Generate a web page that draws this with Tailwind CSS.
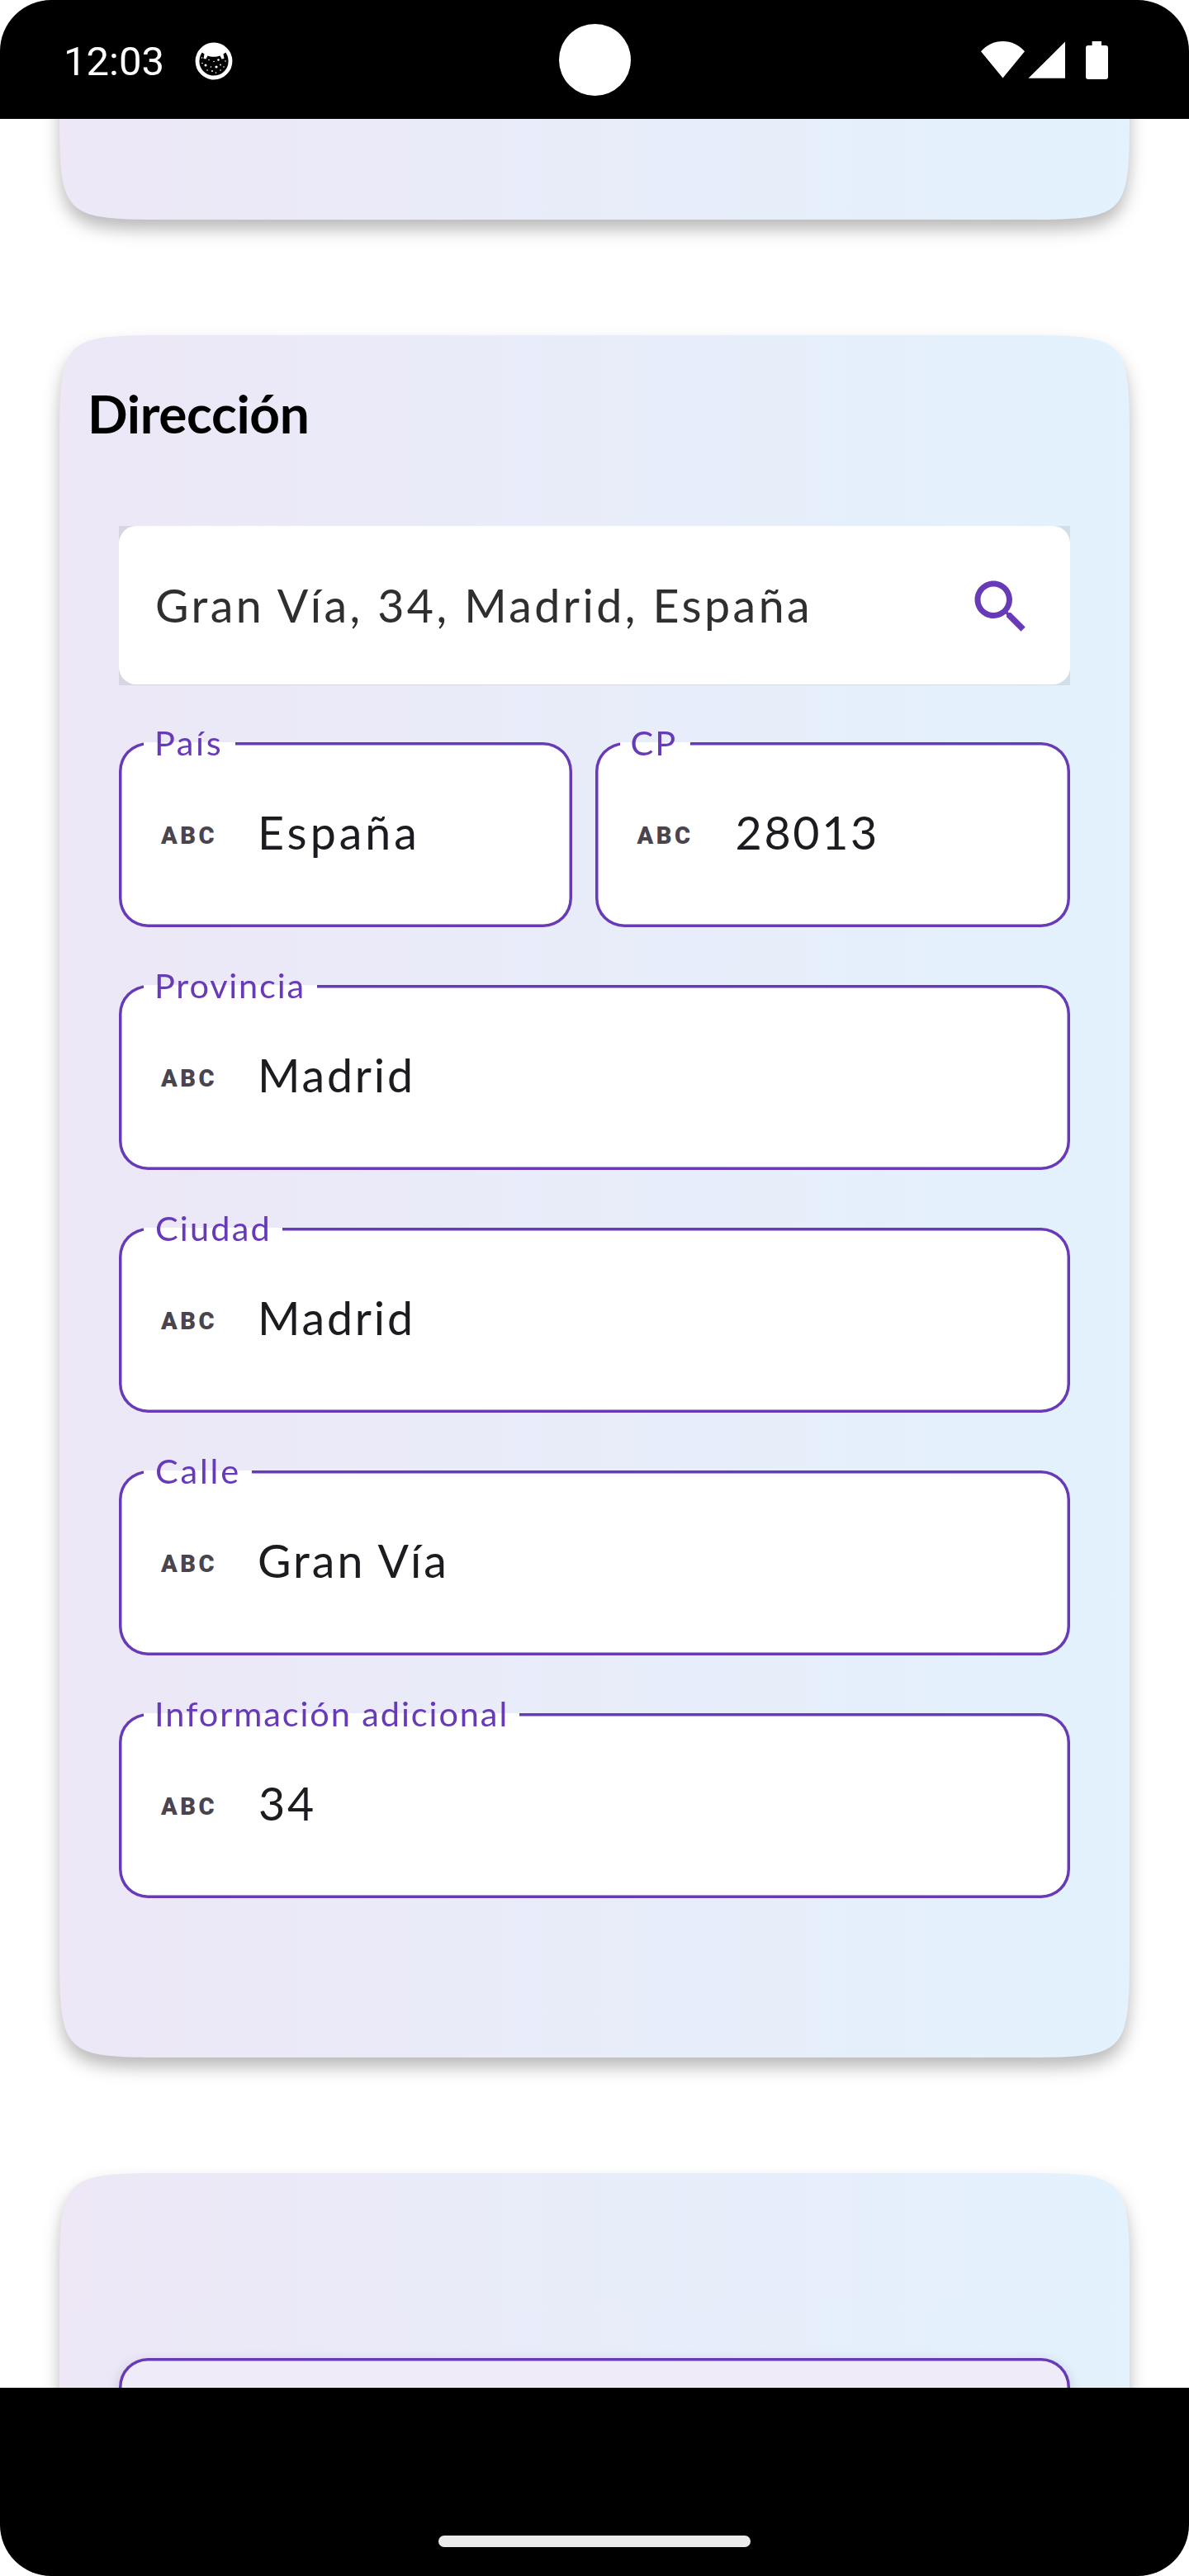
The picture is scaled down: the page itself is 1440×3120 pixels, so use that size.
<!DOCTYPE html>
<html lang="es">
<head>
<meta charset="utf-8">
<title>Dirección</title>
<script src="https://cdn.jsdelivr.net/npm/@tailwindcss/browser@4"></script>
</head>
<body class="bg-white">
<div class="flex h-[3120px] w-[1440px] flex-col overflow-hidden bg-white font-['Lato',sans-serif]">

  <!-- Status bar -->
  <header class="relative flex h-36 shrink-0 items-center rounded-t-[62px] bg-black pr-[97px] pl-[77px] text-white">
    <span class="w-[122px] pt-[6px] font-['Roboto',sans-serif] text-[49px] leading-[60px]">12:03</span>
    <svg class="mt-[3px] ml-[37px] size-[46px]" viewBox="0 0 46 46" fill="none">
      <circle cx="23" cy="23" r="20" stroke="#fff" stroke-width="4.8"/>
      <path d="M8 12C12 5 17 1.500 23 1.500S34 5 38 12L34.500 14.500L35.500 20L32.500 20.500L30.500 16.500C26 18.300 20 18.300 15.500 16.500L13.500 20.500L10.500 20L11.500 14.500Z" fill="#fff"/>
      <g fill="#fff"><circle cx="13" cy="28" r="1.500"/><circle cx="28.500" cy="21.500" r="1.300"/><circle cx="26" cy="30" r="1.600"/><circle cx="8.500" cy="19" r=".8"/><circle cx="17" cy="21.500" r=".8"/><circle cx="23" cy="23.500" r=".8"/><circle cx="9" cy="25.500" r=".8"/><circle cx="19.500" cy="30" r=".8"/><circle cx="21" cy="35" r="1"/><circle cx="15" cy="34" r=".8"/><circle cx="31" cy="27.500" r=".9"/><circle cx="35" cy="30" r=".8"/><circle cx="37" cy="23" r=".8"/><circle cx="31" cy="34" r=".8"/><circle cx="25.500" cy="37" r=".8"/></g>
    </svg>
    <div class="absolute top-[29px] left-[677px] size-[87px] rounded-full bg-white"></div>
    <svg class="mt-[2px] ml-auto h-[46px] w-[155px]" viewBox="0 0 155 46" fill="#fff">
      <path d="M0 12.300C7 4.500 16 0 26.500 0S46 4.500 53 12.300L26.500 44.500Z"/>
      <path d="M102 .5V44.800H57.500Z"/>
      <path d="M134.600 0H146V5H151Q154 5 154 8V43Q154 46 151 46H130Q127 46 127 43V8Q127 5 130 5H134.600Z"/>
    </svg>
  </header>

  <main class="flex h-[2748px] shrink-0 flex-col gap-[140px] overflow-hidden px-[72px]">

    <!-- Previous card, scrolled under the status bar -->
    <section class="-mt-[278px] shrink-0 [filter:drop-shadow(0_12px_10px_rgb(0_0_0/0.27))]">
      <div class="h-[400px] bg-linear-to-r from-[#ede7f6] to-[#e3f2fd] [clip-path:path('M0,140C0,0,0,0,140,0H1156C1296,0,1296,0,1296,140V260C1296,400,1296,400,1156,400H140C0,400,0,400,0,260Z')]"></div>
    </section>

    <!-- Address card -->
    <section class="shrink-0 [filter:drop-shadow(0_12px_10px_rgb(0_0_0/0.27))]">
      <div class="flex h-[2086px] flex-col bg-linear-to-r from-[#ede7f6] to-[#e3f2fd] px-[72px] pt-[63px] [clip-path:path('M0,140C0,0,0,0,140,0H1156C1296,0,1296,0,1296,140V1946C1296,2086,1296,2086,1156,2086H140C0,2086,0,2086,0,1946Z')]">
        <h2 class="-ml-[38px] text-[64px] leading-[64px] font-bold tracking-[-0.36px] text-black">Dirección</h2>

        <div class="mt-[104px] h-[193px] bg-black/8">
          <div class="flex h-[192px] items-center justify-between rounded-[21px] bg-white pr-[42px] pl-[44px]">
            <span class="text-[55.5px] leading-[66px] tracking-[3.45px] text-[#2f2f2f]">Gran Vía, 34, Madrid, España</span>
            <svg class="mt-[3px] size-[84px] fill-[#673ab7]" viewBox="0 0 24 24"><path d="M15.500 14h-.79l-.28-.27C15.410 12.590 16 11.110 16 9.500 16 5.910 13.090 3 9.500 3S3 5.910 3 9.500 5.910 16 9.500 16c1.610 0 3.090-.59 4.230-1.570l.27.28v.79l5 4.990L20.490 19l-4.990-5zm-6 0C7.010 14 5 11.990 5 9.500S7.010 5 9.500 5 14 7.010 14 9.500 11.990 14 9.500 14z"/></svg>
          </div>
        </div>

        <div class="mt-[69px] flex flex-col gap-[70px] text-[55.5px] text-[#1d1b20]">
          <div class="flex gap-7">
            <div class="relative flex h-[224px] w-[548.5px] items-center rounded-[35px] bg-white pb-[7px] pl-[51px] shadow-[inset_0_0_0_3.5px_#673ab7]">
              <label class="absolute -top-[25px] left-[30px] w-[111px] bg-[linear-gradient(to_bottom,transparent_25px,white_25px,white_31px,transparent_31px)] pl-[13px] text-[41.5px] leading-[50px] tracking-[2.6px] whitespace-nowrap text-[#673ab7]">País</label>
              <span class="w-[117px] pt-[9px] font-['Roboto',sans-serif] text-[29px] leading-none font-black tracking-[3.5px] text-[#49454f]">ABC</span>
              <span class="leading-[66px] tracking-[4px]">España</span>
            </div>
            <div class="relative flex h-[224px] flex-1 items-center rounded-[35px] bg-white pb-[7px] pl-[51px] shadow-[inset_0_0_0_3.5px_#673ab7]">
              <label class="absolute -top-[25px] left-[30px] w-[85px] bg-[linear-gradient(to_bottom,transparent_25px,white_25px,white_31px,transparent_31px)] pl-[13px] text-[41.5px] leading-[50px] tracking-[2px] whitespace-nowrap text-[#673ab7]">CP</label>
              <span class="w-[119px] pt-[9px] font-['Roboto',sans-serif] text-[29px] leading-none font-black tracking-[3.5px] text-[#49454f]">ABC</span>
              <span class="leading-[66px] tracking-[2.7px]">28013</span>
            </div>
          </div>

          <div class="relative flex h-[224px] items-center rounded-[35px] bg-white pb-[7px] pl-[51px] shadow-[inset_0_0_0_3.5px_#673ab7]">
            <label class="absolute -top-[25px] left-[30px] w-[210px] bg-[linear-gradient(to_bottom,transparent_25px,white_25px,white_31px,transparent_31px)] pl-[13px] text-[41.5px] leading-[50px] tracking-[1.8px] whitespace-nowrap text-[#673ab7]">Provincia</label>
            <span class="w-[117px] pt-[9px] font-['Roboto',sans-serif] text-[29px] leading-none font-black tracking-[3.5px] text-[#49454f]">ABC</span>
            <span class="leading-[66px] tracking-[2.8px]">Madrid</span>
          </div>

          <div class="relative flex h-[224px] items-center rounded-[35px] bg-white pb-[7px] pl-[51px] shadow-[inset_0_0_0_3.5px_#673ab7]">
            <label class="absolute -top-[25px] left-[30px] w-[168px] bg-[linear-gradient(to_bottom,transparent_25px,white_25px,white_31px,transparent_31px)] pl-[14px] text-[41.5px] leading-[50px] tracking-[2.15px] whitespace-nowrap text-[#673ab7]">Ciudad</label>
            <span class="w-[117px] pt-[9px] font-['Roboto',sans-serif] text-[29px] leading-none font-black tracking-[3.5px] text-[#49454f]">ABC</span>
            <span class="leading-[66px] tracking-[2.8px]">Madrid</span>
          </div>

          <div class="relative flex h-[224px] items-center rounded-[35px] bg-white pb-[7px] pl-[51px] shadow-[inset_0_0_0_3.5px_#673ab7]">
            <label class="absolute -top-[25px] left-[30px] w-[131px] bg-[linear-gradient(to_bottom,transparent_25px,white_25px,white_31px,transparent_31px)] pl-[14px] text-[41.5px] leading-[50px] tracking-[2.8px] whitespace-nowrap text-[#673ab7]">Calle</label>
            <span class="w-[117px] pt-[9px] font-['Roboto',sans-serif] text-[29px] leading-none font-black tracking-[3.5px] text-[#49454f]">ABC</span>
            <span class="leading-[66px] tracking-[3px]">Gran Vía</span>
          </div>

          <div class="relative flex h-[224px] items-center rounded-[35px] bg-white pb-[7px] pl-[51px] shadow-[inset_0_0_0_3.5px_#673ab7]">
            <label class="absolute -top-[25px] left-[30px] w-[455px] bg-[linear-gradient(to_bottom,transparent_25px,white_25px,white_31px,transparent_31px)] pl-[13px] text-[41.5px] leading-[50px] tracking-[1.9px] whitespace-nowrap text-[#673ab7]">Información adicional</label>
            <span class="w-[118px] pt-[9px] font-['Roboto',sans-serif] text-[29px] leading-none font-black tracking-[3.5px] text-[#49454f]">ABC</span>
            <span class="leading-[66px] tracking-[2.8px]">34</span>
          </div>
        </div>
      </div>
    </section>

    <!-- Next card, cut off by the navigation bar -->
    <section class="shrink-0 [filter:drop-shadow(0_12px_10px_rgb(0_0_0/0.27))]">
      <div class="h-[600px] bg-linear-to-r from-[#ede7f6] to-[#e3f2fd] px-[72px] pt-[224px] [clip-path:path('M0,140C0,0,0,0,140,0H1156C1296,0,1296,0,1296,140V460C1296,600,1296,600,1156,600H140C0,600,0,600,0,460Z')]">
        <div class="h-[200px] rounded-[35px] bg-[#efebf8] shadow-[inset_0_0_0_3.5px_#673ab7,0_5px_16px_rgb(0_0_0/0.16)]"></div>
      </div>
    </section>
  </main>

  <!-- Navigation bar -->
  <footer class="flex h-[228px] shrink-0 items-end justify-center rounded-b-[62px] bg-black pb-[35px]">
    <div class="h-[14px] w-[378px] rounded-full bg-[#ebebeb]"></div>
  </footer>
</div>
</body>
</html>
